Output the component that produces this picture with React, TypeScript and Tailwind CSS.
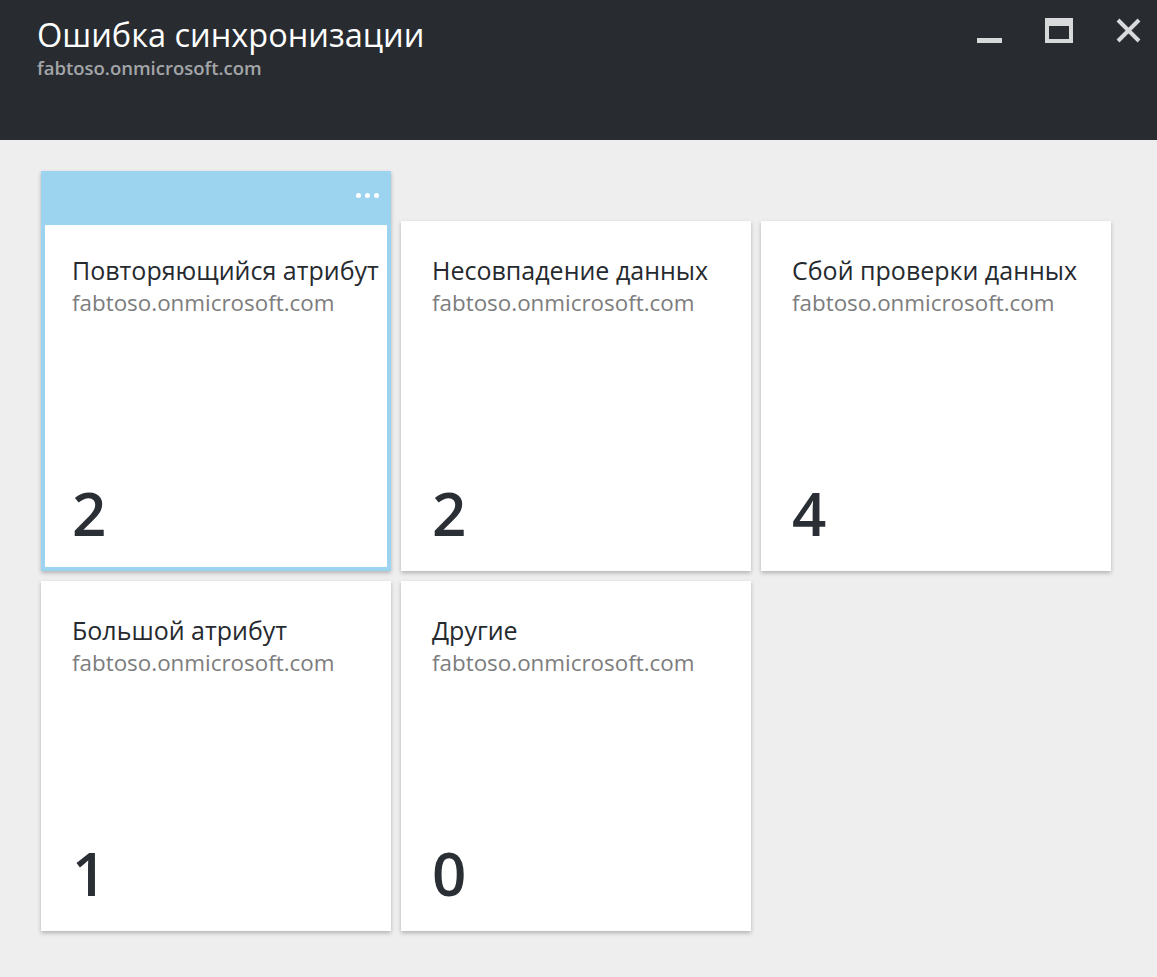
import React from "react";

type Tile = {
  title: string;
  count: number;
  selected?: boolean;
};

const tenant = "fabtoso.onmicrosoft.com";

const tiles: Tile[] = [
  { title: "Повторяющийся атрибут", count: 2, selected: true },
  { title: "Несовпадение данных", count: 2 },
  { title: "Сбой проверки данных", count: 4 },
  { title: "Большой атрибут", count: 1 },
  { title: "Другие", count: 0 },
];

function TileBody({ t }: { t: Tile }) {
  return (
    <div className="flex h-full flex-col justify-between">
      <div>
        <div className="text-[25px] leading-[32px] text-[#262a2f] whitespace-nowrap">{t.title}</div>
        <div className="text-[22.4px] leading-[34px] text-[#7d7d7d] whitespace-nowrap">{tenant}</div>
      </div>
      <div className="text-[60px] leading-[60px] font-semibold text-[#2a2f35]">{t.count}</div>
    </div>
  );
}

function TileCard({ t }: { t: Tile }) {
  if (t.selected) {
    return (
      <div className="flex h-[400px] flex-col bg-[#9cd4f0] px-[4px] pb-[4px] shadow-[0_2px_4px_rgba(0,0,0,0.25)]">
        <div className="flex h-[54px] shrink-0 items-start justify-end gap-[4px] pr-[8px] pt-[22px]">
          <span className="h-[5px] w-[5px] rounded-full bg-white" />
          <span className="h-[5px] w-[5px] rounded-full bg-white" />
          <span className="h-[5px] w-[5px] rounded-full bg-white" />
        </div>
        <div className="flex-1 bg-white px-[27px] pb-[24px] pt-[29px]">
          <TileBody t={t} />
        </div>
      </div>
    );
  }
  return (
    <div className="h-[350px] bg-white px-[31px] pb-[28px] pt-[33px] shadow-[0_2px_4px_rgba(0,0,0,0.25)]">
      <TileBody t={t} />
    </div>
  );
}

export default function App() {
  return (
    <div className="min-h-[977px] bg-[#eeeeee]" style={{ fontFamily: '"Open Sans", "Noto Sans", sans-serif' }}>
      <header className="flex h-[140px] items-start justify-between bg-[#282c31] pl-[37px] pr-[16px]">
        <div className="pt-[13px]">
          <h1 className="text-[32.5px] leading-[44px] font-normal text-white">Ошибка синхронизации</h1>
          <div className="text-[18.5px] leading-[22px] font-semibold text-[#a3a5a8]">{tenant}</div>
        </div>
        <div className="flex items-start gap-[43px] pt-[18px]">
          <svg width="25" height="25" viewBox="0 0 25 25">
            <rect x="0" y="20" width="25" height="5" fill="#d8d9da" />
          </svg>
          <svg width="28" height="25" viewBox="0 0 28 25">
            <path d="M0 0H28V25H0Z M4 8V21H24V8Z" fill="#d8d9da" fillRule="evenodd" />
          </svg>
          <svg width="25" height="25" viewBox="0 0 25 25">
            <path d="M2 2L23 23M23 2L2 23" stroke="#d8d9da" strokeWidth="4" />
          </svg>
        </div>
      </header>
      <main className="pl-[41px] pt-[31px]">
        <div className="grid grid-cols-[350px_350px_350px] items-end gap-[10px]">
          {tiles.map((t) => (
            <TileCard key={t.title} t={t} />
          ))}
        </div>
      </main>
    </div>
  );
}
